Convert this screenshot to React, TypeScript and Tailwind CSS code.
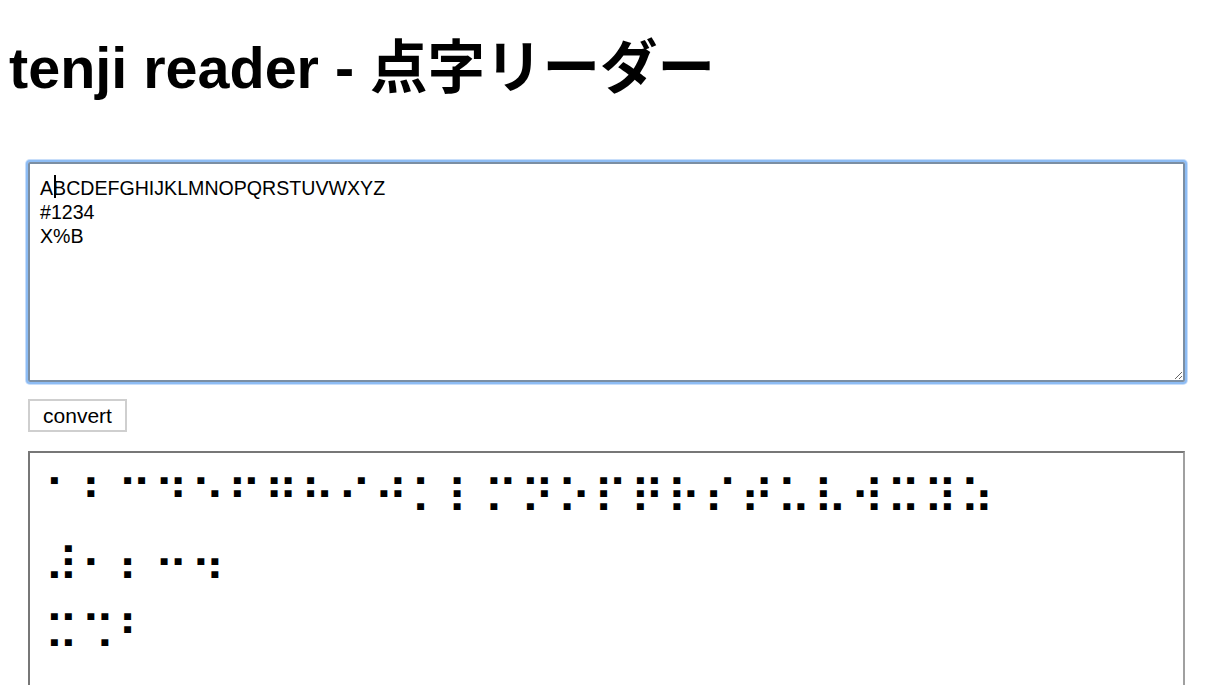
import React, { useState } from "react";

const SOURCE = "ABCDEFGHIJKLMNOPQRSTUVWXYZ\n#1234\nX%B";

// north american computer braille, enough for this page
const NABCC: Record<string, string> = {
  A: "⠁", B: "⠃", C: "⠉", D: "⠙", E: "⠑", F: "⠋", G: "⠛", H: "⠓", I: "⠊",
  J: "⠚", K: "⠅", L: "⠇", M: "⠍", N: "⠝", O: "⠕", P: "⠏", Q: "⠟", R: "⠗",
  S: "⠎", T: "⠞", U: "⠥", V: "⠧", W: "⠺", X: "⠭", Y: "⠽", Z: "⠵",
  "#": "⠼", "1": "⠂", "2": "⠆", "3": "⠒", "4": "⠲", "%": "⠩",
};

const toBraille = (text: string) =>
  text
    .toUpperCase()
    .split("")
    .map((c) => (c === "\n" ? "\n" : NABCC[c] ?? "⠀"))
    .join("");

const App: React.FC = () => {
  const [source, setSource] = useState(SOURCE);
  const [output, setOutput] = useState(toBraille(SOURCE));

  return (
    <div className="h-[685px] overflow-hidden bg-white text-black font-['Liberation_Sans',Arial,sans-serif]">
      <h1 className="pl-[9px] pt-[40px] text-[57.5px] leading-[56px] font-bold font-['Liberation_Sans','Noto_Sans_CJK_JP',sans-serif]">
        tenji reader - 点字リーダー
      </h1>

      <div className="pl-[28px]">
        <div className="relative mt-[66px] w-[1157px]">
          <textarea
            value={source}
            onChange={(e) => setSource(e.target.value)}
            spellCheck={false}
            className="block w-[1157px] h-[220px] rounded-[2px] border-2 border-[#7b8ea3] px-[10px] pt-[12px] text-[19.6px] leading-[24px] outline-none shadow-[0_0_0_2px_#8dbcf4,0_0_0_3px_#c8defa]"
          />
          {/* caret after the A */}
          <span className="pointer-events-none absolute left-[26px] top-[13px] h-[23px] w-[1.5px] bg-black" />
        </div>

        <button
          onClick={() => setOutput(toBraille(source))}
          className="mt-[17px] block w-[99px] h-[33px] border-2 border-[#cfcfcf] bg-white text-[21px] leading-none"
        >
          convert
        </button>

        <textarea
          readOnly
          value={output}
          spellCheck={false}
          className="mt-[19px] block w-[1157px] h-[320px] border-2 border-t-[#777777] border-l-[#777777] border-r-[#a0a0a0] border-b-[#a0a0a0] px-[14px] pt-[11px] text-[47px] leading-[68px] tracking-[2.2px] outline-none resize-none font-['DejaVu_Sans',sans-serif]"
        />
      </div>
    </div>
  );
};

export default App;
